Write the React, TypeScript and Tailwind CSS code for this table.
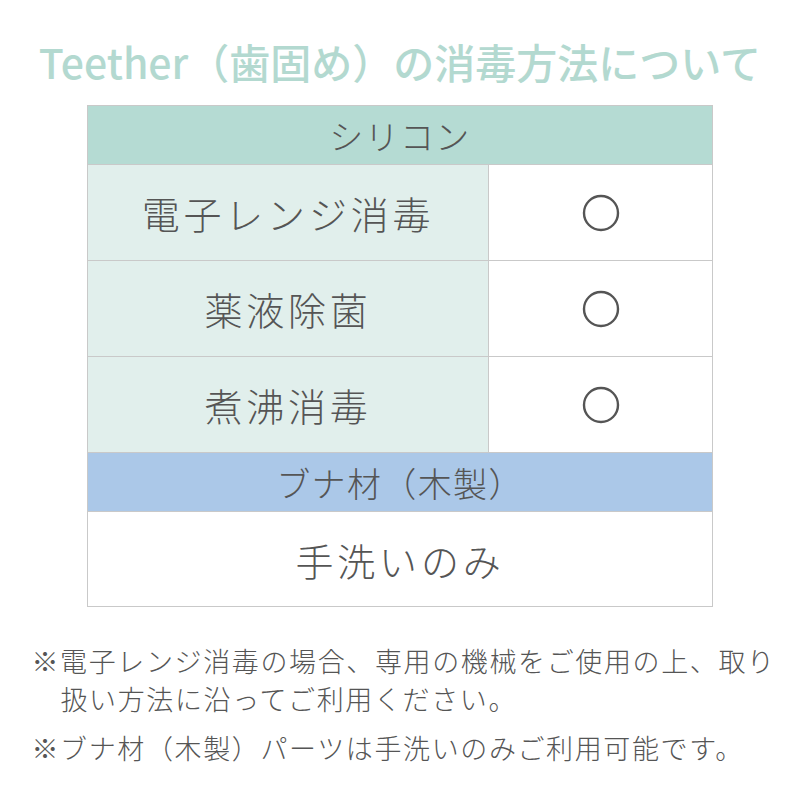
const jp = { fontFamily: '"Noto Sans CJK JP", "Noto Sans", sans-serif' }

function Circle() {
  return (
    <svg width="38" height="38" viewBox="0 0 38 38">
      <circle cx="19" cy="19" r="17" fill="none" stroke="#555" strokeWidth="2.4" />
    </svg>
  )
}

const rows = ["電子レンジ消毒", "薬液除菌", "煮沸消毒"]

export default function App() {
  return (
    <div className="w-[800px] h-[800px] bg-white flex flex-col items-center text-[#555]" style={jp}>
      <h1 className="mt-[33px] text-[41px] leading-[56px] font-medium text-[#b3d9d0]">
        Teether（歯固め）の消毒方法について
      </h1>

      <div className="mt-[16px] w-[626px] border border-[#c9c9c9] font-light">
        <div className="h-[59px] bg-[#b5dbd3] flex items-center justify-center text-[34px] tracking-[0.04em] border-b border-[#c9c9c9]">
          シリコン
        </div>
        {rows.map((r) => (
          <div key={r} className="grid grid-cols-[401px_1fr] h-[96px] border-b border-[#c9c9c9]">
            <div className="bg-[#e1efec] border-r border-[#c9c9c9] flex items-center justify-center text-[38px] tracking-[0.1em]">
              {r}
            </div>
            <div className="bg-white flex items-center justify-center">
              <Circle />
            </div>
          </div>
        ))}
        <div className="h-[59px] bg-[#abc8e8] flex items-center justify-center text-[34px] tracking-[0.04em] border-b border-[#c9c9c9]">
          ブナ材（木製）
        </div>
        <div className="h-[94px] bg-white flex items-center justify-center text-[38px] tracking-[0.1em]">
          手洗いのみ
        </div>
      </div>

      <div className="mt-[35px] w-[750px] ml-[13px] text-[27px] leading-[38px] font-light tracking-[0.06em]">
        <p>※電子レンジ消毒の場合、専用の機械をご使用の上、取り</p>
        <p className="pl-[29px]">扱い方法に沿ってご利用ください。</p>
        <p className="mt-[11px]">※ブナ材（木製）パーツは手洗いのみご利用可能です。</p>
      </div>
    </div>
  )
}
